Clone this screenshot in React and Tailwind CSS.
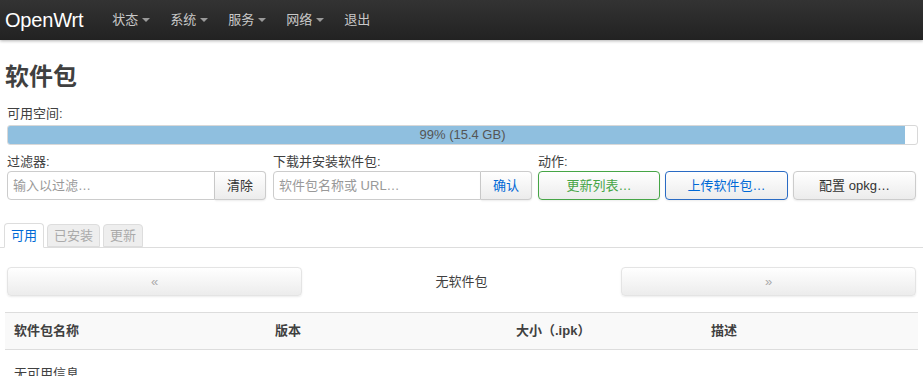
const font = { fontFamily: '"Liberation Sans", "Noto Sans CJK SC", sans-serif' };

const Caret = () => (
  <span className="ml-1 inline-block w-0 h-0 border-l-[4px] border-r-[4px] border-t-[4px] border-l-transparent border-r-transparent border-t-[#9a9a9a] align-middle" />
);

const NavItem = ({ label, caret }) => (
  <a className="flex items-center text-[13px] text-[#c8c8c8] px-[8px]">
    {label}
    {caret && <Caret />}
  </a>
);

const Btn = ({ children, className = "" }) => (
  <button
    className={`h-[29px] rounded-[4px] border bg-gradient-to-b from-white to-[#ececec] text-[13px] flex items-center justify-center shadow-[0_1px_2px_rgba(0,0,0,0.08)] ${className}`}
  >
    {children}
  </button>
);

export default function App() {
  return (
    <div className="w-[923px] h-[376px] overflow-hidden bg-white text-[#404040]" style={font}>
      <div className="h-[40px] bg-gradient-to-b from-[#333] to-[#222] flex items-center shadow-[0_1px_3px_rgba(0,0,0,0.3)]">
        <span className="text-white text-[20px] pl-[5px] pr-[21px] tracking-[-0.2px]">OpenWrt</span>
        <div className="flex items-center gap-[4px]">
          <NavItem label="状态" caret />
          <NavItem label="系统" caret />
          <NavItem label="服务" caret />
          <NavItem label="网络" caret />
          <NavItem label="退出" />
        </div>
      </div>

      <div className="px-[5px]">
        <h2 className="text-[24px] font-bold text-[#404040] mt-[19px] leading-[36px]">软件包</h2>

        <div className="px-[2px] mt-[11px]">
          <div className="text-[13px] leading-[16px]">可用空间:</div>
          <div className="mt-[3px] h-[20px] w-[911px] rounded-[3px] border border-[#d8d8d8] bg-white relative overflow-hidden">
            <div className="h-full w-[98.7%] bg-[#8fbfdf]" />
            <div className="absolute inset-0 flex items-center justify-center text-[13px] text-[#555]">99% (15.4 GB)</div>
          </div>

          <div className="flex mt-[9px]">
            <div className="w-[266px]">
              <div className="text-[13px] leading-[16px]">过滤器:</div>
              <div className="flex mt-[1px]">
                <input
                  className="w-[208px] h-[29px] border border-[#ccc] rounded-l-[4px] px-[5px] text-[13px] placeholder:text-[#999] outline-none"
                  placeholder="输入以过滤…"
                />
                <Btn className="w-[51px] rounded-l-none border-[#ccc] border-l-0 text-[#333]">清除</Btn>
              </div>
            </div>
            <div className="w-[265px]">
              <div className="text-[13px] leading-[16px]">下载并安装软件包:</div>
              <div className="flex mt-[1px]">
                <input
                  className="w-[208px] h-[29px] border border-[#ccc] rounded-l-[4px] px-[5px] text-[13px] placeholder:text-[#999] outline-none"
                  placeholder="软件包名称或 URL…"
                />
                <Btn className="w-[51px] rounded-l-none border-[#ccc] border-l-0 text-[#0069d6]">确认</Btn>
              </div>
            </div>
            <div>
              <div className="text-[13px] leading-[16px]">动作:</div>
              <div className="flex gap-[5px] mt-[1px]">
                <Btn className="w-[122px] border-[#46a546] text-[#46a546]">更新列表…</Btn>
                <Btn className="w-[123px] border-[#2a6bc4] text-[#0069d6]">上传软件包…</Btn>
                <Btn className="w-[123px] border-[#ccc] text-[#333]">配置 opkg…</Btn>
              </div>
            </div>
          </div>
        </div>

        <div className="flex items-end gap-[3px] mt-[23px] border-b border-[#ddd] h-[25px] -mx-[5px] px-[4px]">
          <div className="h-[25px] px-[6px] border border-[#ddd] border-b-white bg-white rounded-t-[4px] text-[13px] text-[#0069d6] flex items-center -mb-px">可用</div>
          <div className="h-[23px] px-[6px] border border-[#ddd] bg-[#eee] rounded-t-[4px] text-[13px] text-[#aaa] flex items-center">已安装</div>
          <div className="h-[23px] px-[6px] border border-[#ddd] bg-[#eee] rounded-t-[4px] text-[13px] text-[#aaa] flex items-center">更新</div>
        </div>

        <div className="flex items-center px-[2px] mt-[19px]">
          <Btn className="w-[295px] border-[#e4e4e4] text-[#aaa] text-[12px]">«</Btn>
          <div className="flex-1 text-center text-[13px] text-[#404040]">无软件包</div>
          <Btn className="w-[295px] border-[#e4e4e4] text-[#aaa] text-[12px]">»</Btn>
        </div>

        <div className="mt-[16px] h-[38px] bg-[#f9f9f9] border-t border-b border-[#ddd] flex items-center text-[13px] font-bold text-[#404040]">
          <div className="w-[270px] pl-[9px]">软件包名称</div>
          <div className="w-[241px]">版本</div>
          <div className="w-[195px]">大小（.ipk）</div>
          <div>描述</div>
        </div>

        <div className="pl-[9px] mt-[14px] text-[13px]">无可用信息</div>
      </div>
    </div>
  );
}
